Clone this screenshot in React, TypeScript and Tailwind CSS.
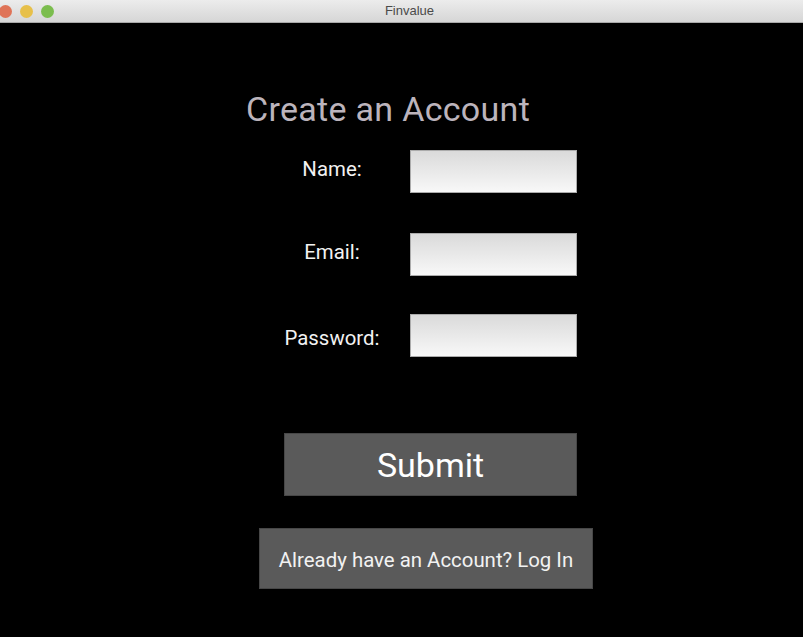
import React from "react";

function Field({ label, shift }: { label: string; shift: string }) {
  return (
    <div className="flex items-center ml-[284px]">
      <div className={`w-[96px] text-center text-[20.4px] leading-none text-[#f2f2f2] ${shift}`}>{label}</div>
      <div className="ml-[30px] w-[167px] h-[43px] border border-[#ababab] bg-gradient-to-b from-[#dadada] to-[#f8f8f8]" />
    </div>
  );
}

export default function App() {
  return (
    <div className="w-[803px] h-[637px] bg-black flex flex-col overflow-hidden" style={{ fontFamily: "Roboto, 'Liberation Sans', sans-serif" }}>
      <div className="relative h-[23px] shrink-0 flex items-center bg-gradient-to-b from-[#ececec] to-[#d6d6d6] border-b border-[#a9a9a9]">
        <div className="flex items-center gap-[8px] ml-[-1px]">
          <div className="w-[13px] h-[13px] rounded-full bg-[#df7357]" />
          <div className="w-[13px] h-[13px] rounded-full bg-[#e7c04a]" />
          <div className="w-[13px] h-[13px] rounded-full bg-[#7bbd4e]" />
        </div>
        <div className="absolute inset-0 flex items-center justify-center pl-[16px] text-[13px] text-[#4a4a4a]" style={{ fontFamily: "'Liberation Sans', Arial, sans-serif" }}>
          Finvalue
        </div>
      </div>
      <div className="flex flex-col items-start">
        <div className="mt-[69px] ml-[246px] h-[34px] leading-[34px] text-[34px] tracking-[0.3px] text-[#bcb4bc] whitespace-nowrap">Create an Account</div>
        <div className="mt-[24px]"><Field label="Name:" shift="pb-[4px]" /></div>
        <div className="mt-[40px]"><Field label="Email:" shift="pb-[4px]" /></div>
        <div className="mt-[38px]"><Field label="Password:" shift="pt-[5px]" /></div>
        <button className="mt-[76px] ml-[284px] w-[293px] h-[63px] bg-[#5a5a5a] border border-[#474747] text-white text-[34px] leading-none flex items-center justify-center">
          Submit
        </button>
        <button className="mt-[32px] ml-[259px] w-[334px] h-[61px] pt-[3px] bg-[#5a5a5a] border border-[#474747] text-[#f2f2f2] text-[20.4px] leading-none flex items-center justify-center whitespace-nowrap">
          Already have an Account? Log In
        </button>
      </div>
    </div>
  );
}
